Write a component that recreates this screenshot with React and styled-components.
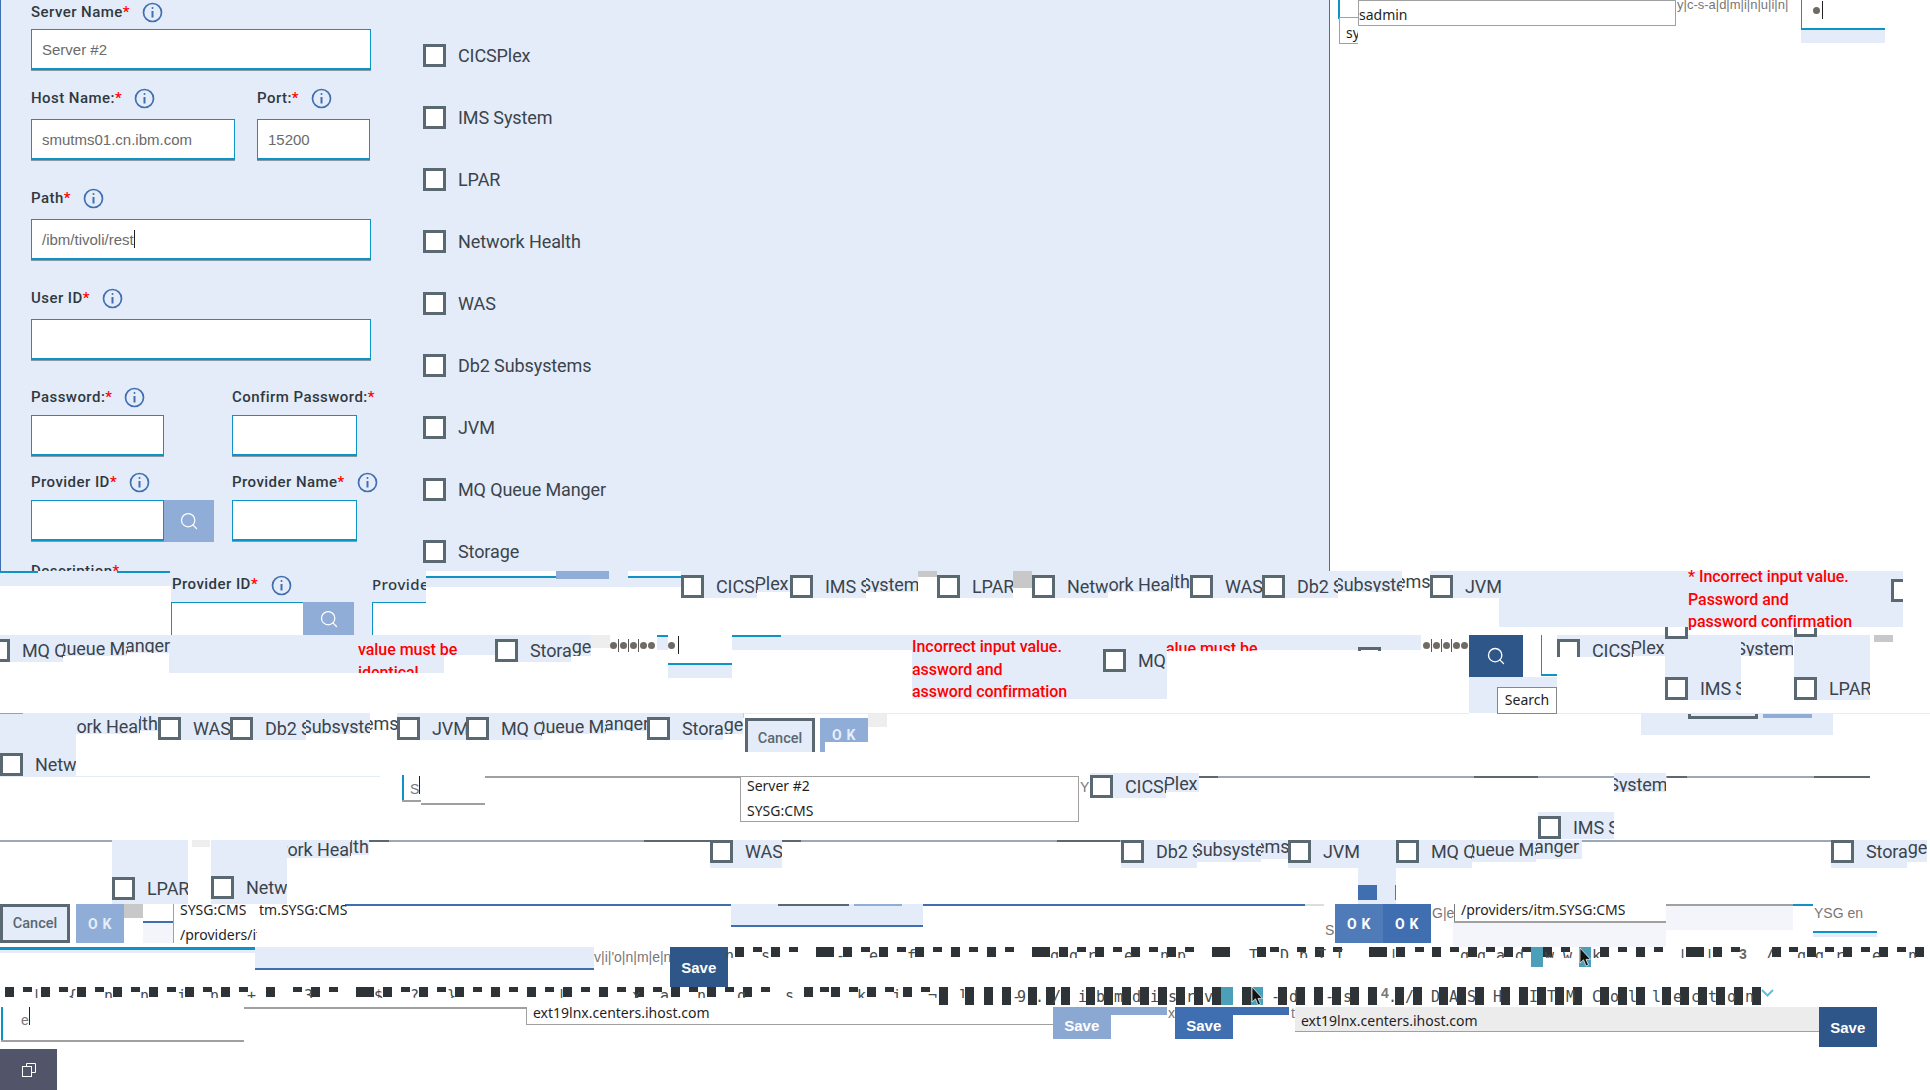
import React from 'react'
import styled, { createGlobalStyle, css } from 'styled-components'
import { Search } from 'lucide-react'

const PANEL_HEIGHT = 571
const PLEX = `Roboto, "Noto Sans", sans-serif`
const MONO = `"DejaVu Sans Mono", "Liberation Mono", monospace`
const ARIAL = `"Liberation Sans", Arial, sans-serif`
const LIGHT = '#e4ecf9'
const PALE = '#f3f5fb'
const TEAL = '#0f93c4'
const BLUE = '#3f6fb0'
const NAVY = '#2f5688'
const FADED = '#8fadd6'
const SLATE = '#5a6872'
const INK = '#2d3336'

const GlobalStyle = createGlobalStyle`
  html, body { margin: 0; padding: 0; background: #fff; }
  body { font-family: ${PLEX}; }
`

// pieces of the broken repaint sit on a free canvas, coordinates are page coordinates
const at = css`
  position: absolute;
  left: ${p => p.$x}px;
  top: ${p => p.$y - PANEL_HEIGHT}px;
`

const Page = styled.div`
  width: 1930px;
  height: 1090px;
  overflow: hidden;
  position: relative;
`

const Panel = styled.section`
  width: 1330px;
  height: ${PANEL_HEIGHT}px;
  box-sizing: border-box;
  overflow: hidden;
  display: flex;
  background: ${LIGHT};
  border-left: 1.5px solid ${BLUE};
  border-right: 1.5px solid ${BLUE};
`

const Form = styled.div`
  width: 340px;
  padding: 2px 0 0 30px;
  flex: none;
`

const FormRow = styled.div`
  display: flex;
  margin-top: ${p => p.$mt || 0}px;
`

const Field = styled.div`
  width: ${p => p.$w}px;
  margin-right: ${p => p.$gap || 0}px;
  flex: none;
`

const LabelRow = styled.div`
  height: 20px;
  margin-bottom: ${p => p.$mb}px;
  display: flex;
  align-items: center;
  white-space: nowrap;
`

const Label = styled.label`
  font-size: 15px;
  font-weight: 500;
  letter-spacing: 0.45px;
  color: #30393f;
`

const Star = styled.span`
  color: #f00;
`

const InfoMark = styled.svg`
  width: 21px;
  height: 21px;
  margin-left: ${p => p.$ml ?? 12}px;
  flex: none;
`

const InputBox = styled.div`
  height: 41px;
  box-sizing: border-box;
  display: flex;
  align-items: center;
  padding-left: 10px;
  background: #fff;
  border: 1px solid ${TEAL};
  border-bottom-width: 2px;
  box-shadow: 0 1px 0 #8b98a2;
  font-family: ${ARIAL};
  font-size: 15px;
  color: #6a6a6a;
`

const Caret = styled.span`
  display: inline-block;
  width: 1px;
  height: 18px;
  background: #222;
`

const SearchPair = styled.div`
  display: flex;
  width: 183px;
`

const SearchBox = styled.button`
  width: 50px;
  height: 42px;
  border: 0;
  padding: 0;
  display: flex;
  align-items: center;
  justify-content: center;
  background: ${p => p.$c || FADED};
  color: #fff;
`

const CheckColumn = styled.div`
  display: flex;
  flex-direction: column;
  gap: 39px;
  padding: 44px 0 0 52px;
`

const CheckRow = styled.div`
  display: flex;
  align-items: center;
  gap: 12px;
  height: 23px;
`

const CheckBox = styled.span`
  display: block;
  flex: none;
  width: 23px;
  height: 23px;
  box-sizing: border-box;
  border: 3px solid ${SLATE};
  background: #fff;
`

const CheckText = styled.span`
  font-size: 18px;
  letter-spacing: -0.1px;
  color: #3b444c;
  white-space: nowrap;
`

const Canvas = styled.div`
  position: relative;
  height: ${1090 - PANEL_HEIGHT}px;
`

const Patch = styled.div`
  ${at}
  width: ${p => p.$w}px;
  height: ${p => p.$h}px;
  background: ${p => p.$c || LIGHT};
`

const Scrap = styled.div`
  ${at}
  width: ${p => p.$w}px;
  height: ${p => p.$h}px;
  box-sizing: border-box;
  background: #fff;
  border: 0 solid ${p => p.$c || TEAL};
  border-top-width: ${p => (p.$edges.includes('t') ? 1.5 : 0)}px;
  border-left-width: ${p => (p.$edges.includes('l') ? 1.5 : 0)}px;
  border-right-width: ${p => (p.$edges.includes('r') ? 1.5 : 0)}px;
  border-bottom-width: ${p => (p.$edges.includes('b') ? 2 : 0)}px;
`

const Slice = styled.div`
  ${at}
  width: ${p => p.$w}px;
  height: ${p => p.$h}px;
  overflow: hidden;
  background: ${p => (p.$plain ? '#fff' : LIGHT)};
`

const SliceBox = styled(CheckBox)`
  position: absolute;
  left: 0;
  top: ${p => p.$top}px;
`

const SliceText = styled(CheckText)`
  position: absolute;
  left: ${p => p.$left}px;
  top: ${p => p.$top}px;
  line-height: 23px;
`

const Stub = styled.div`
  ${at}
  width: 23px;
  height: ${p => p.$h}px;
  box-sizing: border-box;
  background: #fff;
  border: 3px solid ${SLATE};
  border-width: ${p => p.$open === 'top' ? '0 3px 3px' : '3px 3px 0'};
`

const Redline = styled.div`
  ${at}
  font-size: 16px;
  font-weight: 500;
  letter-spacing: -0.05px;
  color: #f00;
  line-height: 22.5px;
  white-space: pre;
  height: ${p => p.$h}px;
  width: ${p => p.$w}px;
  overflow: hidden;
`

const Cancel = styled.button`
  ${at}
  width: 70px;
  height: ${p => p.$h}px;
  box-sizing: border-box;
  padding: ${p => p.$h < 39 ? '3px 0 0' : 0};
  border: 3px solid ${SLATE};
  ${p => p.$h < 39 && 'border-bottom: 0;'}
  background: ${LIGHT};
  color: ${SLATE};
  font: 500 14.5px ${PLEX};
`

const OkButton = styled.button`
  ${at}
  width: 48px;
  height: ${p => p.$h}px;
  border: 0;
  padding: 0;
  overflow: hidden;
  background: ${p => p.$c};
  color: ${p => p.$faded ? '#e6eefa' : '#fff'};
  font: 700 14px ${PLEX};
  letter-spacing: 0.6px;
`

const SaveButton = styled.button`
  ${at}
  width: 57.5px;
  height: ${p => p.$h}px;
  border: 0;
  padding: ${p => p.$pt || 0}px 0 0;
  background: ${p => p.$c};
  color: #fff;
  font: 700 15px ${ARIAL};
`

const NavyButton = styled(SearchBox)`
  ${at}
  width: 54px;
  height: 42px;
`

const SearchPiece = styled(SearchBox)`
  ${at}
  width: ${p => p.$w}px;
  height: ${p => p.$h}px;
  overflow: hidden;
`

const Tip = styled.div`
  ${at}
  width: 60px;
  height: 27px;
  box-sizing: border-box;
  border: 1px solid #888;
  background: #fff;
  color: #222;
  font: 14px "Noto Sans", sans-serif;
  text-align: center;
  line-height: 24px;
`

const Menu = styled.div`
  ${at}
  width: ${p => p.$w}px;
  height: ${p => p.$h}px;
  box-sizing: border-box;
  padding-left: ${p => p.$pad ?? 6}px;
  overflow: hidden;
  border: 1.5px solid #a0a0a0;
  ${p => p.$noTop && 'border-top: 0;'}
  ${p => p.$noRight && 'border-right: 0;'}
  ${p => p.$noLeft && 'border-left: 0;'}
  background: ${p => p.$c || '#fff'};
`

const MenuLine = styled.div`
  height: 25px;
  margin-top: ${p => p.$mt || 0}px;
  font: 14px/25px "Noto Sans", sans-serif;
  color: #1f1f1f;
  white-space: nowrap;
`

const FreeLine = styled.div`
  margin-top: ${p => p.$mt || 0}px;
  font: 14px/18px "Noto Sans", sans-serif;
  color: #1f1f1f;
  white-space: nowrap;
`

const FreeText = styled.div`
  ${at}
  font: ${p => p.$size || 14}px/18px ${p => p.$font || '"Noto Sans", sans-serif'};
  color: ${p => p.$c || '#1f1f1f'};
  white-space: pre;
  height: ${p => p.$h || 18}px;
  overflow: hidden;
  ${p => p.$w && `width: ${p.$w}px;`}
`

const Block = styled.div`
  ${at}
  width: ${p => p.$w || 9}px;
  height: ${p => p.$h}px;
  background: ${INK};
`

const Glyph = styled.div`
  ${at}
  width: 10px;
  height: ${p => p.$h}px;
  overflow: hidden;
  font: 15px/18px ${MONO};
  color: #444c50;
`

const DotRun = styled.div`
  ${at}
  display: flex;
  align-items: center;
  height: 14px;
`

const Dot = styled.span`
  width: 7px;
  height: 7px;
  border-radius: 50%;
  background: #6f6a64;
  margin-right: ${p => p.$gap ?? 1}px;
`

const Tick = styled.span`
  width: 1px;
  height: 13px;
  background: #5a5a5a;
  margin-right: 1px;
`

const RestoreTab = styled.div`
  ${at}
  width: 57px;
  height: 41px;
  display: flex;
  align-items: center;
  justify-content: center;
  background: #52556a;
`

const Pointer = styled.svg`
  ${at}
  width: 12px;
  height: 19px;
`

const Chevron = styled.svg`
  ${at}
  width: 13px;
  height: 8px;
`

const Info = ({ ml }) => (
  <InfoMark $ml={ml} viewBox="0 0 21 21" fill="none" stroke="#3f6fb0" strokeWidth="1.7">
    <circle cx="10.5" cy="10.5" r="9" />
    <path d="M10.5 9v6.5" strokeWidth="2" />
    <circle cx="10.5" cy="6" r="1" fill="#3f6fb0" stroke="none" />
  </InfoMark>
)

const FieldLabel = ({ text, mb, ml, info = true }) => (
  <LabelRow $mb={mb}>
    <Label>{text}<Star>*</Star></Label>
    {info && <Info ml={ml} />}
  </LabelRow>
)

const CHECKS = ['CICSPlex', 'IMS System', 'LPAR', 'Network Health', 'WAS', 'Db2 Subsystems', 'JVM', 'MQ Queue Manger', 'Storage']

// how far each label reaches from the left of its checkbox, and how much its second slice is lifted
const REACH = {
  CICSPlex: [109, 3.5],
  'IMS System': [128, 2.5],
  LPAR: [76, 0],
  'Network Health': [158, 2.5],
  WAS: [72, 0],
  'Db2 Subsystems': [168, 2.5],
  JVM: [74, 0],
  'MQ Queue Manger': [186, 2.5],
  Storage: [96, 4.5],
}

// one checkbox row torn in up to three slices, each lifted a little more than the one before
const TornOption = ({ x, y, label, skip, cut, top = 4, under = 0, plainEnd, h }) => {
  const [reach, lift] = REACH[label]
  const first = h || top + 23 + under
  return (
    <>
      {!skip && (
        <Slice $x={x} $y={y - top} $w={cut || Math.min(reach, 76)} $h={first}>
          <SliceBox $top={top} />
          <SliceText $left={35} $top={top}>{label}</SliceText>
        </Slice>
      )}
      {!cut && reach > 76 && (
        <Slice $x={x + 76} $y={y - top} $w={Math.min(reach - 76, 64)} $h={top + 17 + under}>
          <SliceText $left={35 - 76} $top={top - lift}>{label}</SliceText>
        </Slice>
      )}
      {!cut && reach > 140 && (
        <Slice $x={x + 140} $y={y - top} $w={reach - 140} $h={top + 14 + under} $plain={plainEnd}>
          <SliceText $left={35 - 140} $top={top - 5}>{label}</SliceText>
        </Slice>
      )}
    </>
  )
}

const OPTIONS = [
  { x: 681, y: 575, label: 'CICSPlex' },
  { x: 790, y: 575, label: 'IMS System' },
  { x: 937, y: 575, label: 'LPAR' },
  { x: 1032, y: 575, label: 'Network Health' },
  { x: 1190, y: 575, label: 'WAS' },
  { x: 1262, y: 575, label: 'Db2 Subsystems', plainEnd: true },
  { x: 1430, y: 575, label: 'JVM' },
  { x: -13, y: 639, label: 'MQ Queue Manger' },
  { x: 495, y: 639, label: 'Storage' },
  { x: 1103, y: 649, label: 'MQ Queue Manger', cut: 64 },
  { x: 1557, y: 639, label: 'CICSPlex', h: 22 },
  { x: 1665, y: 639, label: 'IMS System', skip: true },
  { x: 1665, y: 677, label: 'IMS System', cut: 76 },
  { x: 1794, y: 677, label: 'LPAR', cut: 76 },
  { x: 0, y: 717, label: 'Network Health', skip: true },
  { x: 0, y: 753, label: 'Network Health', cut: 76 },
  { x: 158, y: 717, label: 'WAS' },
  { x: 230, y: 717, label: 'Db2 Subsystems', plainEnd: true },
  { x: 397, y: 717, label: 'JVM' },
  { x: 466, y: 717, label: 'MQ Queue Manger' },
  { x: 647, y: 717, label: 'Storage' },
  { x: 1090, y: 775, label: 'CICSPlex', top: 2 },
  { x: 1538, y: 775, label: 'IMS System', skip: true, top: 2 },
  { x: 1538, y: 816, label: 'IMS System', cut: 76 },
  { x: 112, y: 877, label: 'LPAR', cut: 76 },
  { x: 211, y: 876, label: 'Network Health', cut: 76 },
  { x: 211, y: 840, label: 'Network Health', skip: true, top: 0, under: 1 },
  { x: 710, y: 840, label: 'WAS', top: 0, under: 5 },
  { x: 1121, y: 840, label: 'Db2 Subsystems', top: 0, under: 5 },
  { x: 1288, y: 840, label: 'JVM', top: 0, under: 5 },
  { x: 1396, y: 840, label: 'MQ Queue Manger', top: 0, under: 5 },
  { x: 1831, y: 840, label: 'Storage', top: 0, under: 5 },
]

// x, y, w, h, colour
const PATCHES = [
  [0, 571, 171, 15], [171, 571, 255, 64], [426, 571, 255, 16],
  [1499, 571, 404, 56], [1801, 30, 84, 13],
  [169, 635, 275, 38], [444, 635, 51, 20], [657, 635, 11, 15],
  [668, 663, 64, 15], [732, 635, 180, 15], [912, 635, 255, 64], [1167, 635, 254, 15],
  [1469, 677, 88, 36], [1665, 635, 76, 64], [1794, 635, 76, 64],
  [0, 713, 76, 64], [1641, 713, 192, 22], [112, 840, 76, 64], [211, 840, 76, 64],
  [1358, 840, 38, 64], [731, 904, 192, 21], [255, 947, 339, 21], [0, 949, 255, 4],
  [143, 921, 30, 22, PALE], [1453, 921, 213, 26, PALE], [1666, 905, 127, 25, PALE], [1813, 932, 64, 5],
  // grey remains
  [918, 571, 19, 6, '#c8c8c8'], [1013, 571, 19, 17, '#c8c8c8'], [1874, 635, 19, 7, '#c8c8c8'],
  [124, 904, 19, 14, '#c8c8c8'], [590, 635, 20, 13, '#eeeeee'], [868, 713, 19, 14, '#eeeeee'],
  [192, 840, 18, 7, '#eeeeee'],
  // stray colour
  [1763, 713, 49, 5, FADED], [1358, 885, 19, 15, BLUE], [1395, 885, 1, 15, TEAL],
  [1531, 947, 12, 20, '#4b9fb8'], [1579, 947, 12, 20, '#4b9fb8'], [1221, 987, 12, 18, '#4b9fb8'], [1251, 987, 12, 18, '#4b9fb8'],
  [1110, 1007, 57, 8, '#8ba8d2'], [1232, 1007, 57, 8, BLUE],
  // bottom edge of a cancel button
  [1688, 713, 70, 6, SLATE], [1691, 713, 64, 3, LIGHT],
]

const RULES = [
  [0, 571, 38, 2, TEAL], [117, 571, 53, 2, TEAL],
  [0, 713, 1469, 1, LIGHT], [0, 776, 380, 1, LIGHT], [1557, 713, 373, 1, LIGHT],
  [1198, 776, 672, 1.5, '#9aa8b8'], [1193, 776, 25, 2, SLATE], [1474, 776, 64, 2, SLATE], [1667, 776, 20, 2, SLATE], [1814, 776, 56, 2, SLATE],
  [0, 840, 112, 1.5, '#9aa8b8'], [287, 840, 1000, 1.5, '#9aa8b8'], [369, 840, 20, 2, SLATE], [644, 840, 66, 2, SLATE], [781, 840, 20, 2, SLATE], [1057, 840, 63, 2, SLATE],
  [1419, 840, 412, 1.5, '#9aa8b8'],
  [345, 904, 386, 1.5, BLUE], [923, 904, 382, 1.5, BLUE], [778, 904, 71, 1.5, SLATE], [854, 904, 48, 1.5, FADED], [731, 925, 192, 1.5, BLUE],
  [143, 921, 30, 1.5, BLUE], [173, 904, 1, 39, '#a0a0a0'], [1305, 904, 19, 1.5, '#dddddd'],
  [0, 947, 255, 2.5, TEAL], [255, 968, 339, 1.5, BLUE],
  [1666, 904, 127, 1.5, '#a0a0a0'], [1793, 904, 20, 2, TEAL], [1813, 931, 64, 2, TEAL],
  [732, 635, 49, 2, TEAL], [668, 663, 64, 2, TEAL], [657, 635, 11, 1.5, TEAL],
  [1, 1007, 1.5, 33, TEAL], [1, 1040, 243, 1.5, '#a0a0a0'], [244, 1007, 282, 1.5, '#a0a0a0'],
  [402, 775, 1.5, 25, TEAL], [402, 800, 19, 1.5, '#a0a0a0'], [421, 803, 64, 1.5, '#a0a0a0'], [485, 776, 255, 1.5, '#a0a0a0'],
  [0, 713, 23, 1, '#a0a0a0'],
  [1454, 904, 1, 17, '#777777'], [1454, 921, 212, 1.5, '#a0a0a0'],
  [1338, 0, 1.5, 17, TEAL], [1338, 17, 20, 1.5, TEAL],
  [743, 713, 1, 5, '#cccccc'],
]

const tall = 10
const short = 5
const full = 18

// x, height, optional width
const ROW_A = [
  [735, tall], [753, short], [771, tall], [789, short], [816, tall, 18], [843, tall], [861, short], [879, tall], [897, short],
  [915, tall], [933, short], [951, tall], [969, short], [987, tall], [1005, short], [1032, tall, 18], [1059, tall], [1077, short],
  [1095, tall], [1113, short], [1131, tall], [1149, short], [1167, tall], [1185, short], [1212, tall, 18], [1257, tall], [1270, short],
  [1297, short], [1315, tall], [1333, short], [1369, tall, 18], [1396, tall], [1415, short], [1432, tall], [1450, short], [1468, tall],
  [1486, short], [1504, tall], [1522, short], [1543, tall], [1561, short], [1600, tall], [1618, short], [1636, tall], [1654, short],
  [1686, tall, 18], [1713, tall], [1731, short], [1772, tall], [1789, short], [1807, tall], [1825, short], [1843, tall], [1861, short],
  [1879, tall], [1897, short], [1915, tall],
]

const ROW_B = [
  [5, tall], [23, short], [41, tall], [59, short], [77, tall], [95, short], [113, tall], [131, short], [149, tall], [167, short],
  [185, tall], [203, short], [221, tall], [239, short], [266, tall], [293, short], [311, tall], [329, short], [356, tall, 18], [383, tall],
  [401, short], [419, tall], [437, short], [455, tall], [473, short], [491, tall], [509, short], [527, tall], [545, short], [563, tall],
  [581, short], [599, tall], [617, short], [635, tall], [653, short], [671, tall], [689, short], [707, tall], [725, short], [743, tall],
  [761, short], [804, tall], [820, short], [831, tall], [849, short], [867, tall], [885, short], [903, tall], [921, short],
  [939, full], [965, full], [984, full], [1002, full], [1028, full], [1046, full], [1061, full], [1086, full], [1104, full], [1122, full],
  [1140, full], [1158, full], [1176, full], [1194, full], [1212, full], [1242, full], [1278, full], [1296, full], [1314, full], [1332, full],
  [1350, full], [1368, full], [1395, full], [1413, full], [1439, full], [1457, full], [1475, full], [1501, full], [1519, full], [1537, full],
  [1555, full], [1573, full], [1600, full], [1618, full], [1636, full], [1662, full], [1680, full], [1698, full], [1716, full], [1734, full], [1752, full],
]

const GLYPHS_A = 'n:725 s:761 -:836 e:869 f:907 q:1050 g:1069 r:1087 e:1124 n:1160 p:1177 T:1249 D:1280 p:1299 T:1317 I:1335 |:1389 q:1460 g:1477 a:1496 d:1515 w:1545 w:1563 k:1592 |:1678 |:1705 /:1765 q:1797 g:1815 r:1835 e:1872 n:1908'
const GLYPHS_B_CLIPPED = '{:68 n:104 n:140 j:177 n:210 +:247 3:304 $:374 ?:410 }:447 |:32 |:557 x:632 a:660 n:697 q:737 s:785 k:857 j:892 l:959 ¬:928'
const GLYPHS_B = '-:1012 9:1017 .:1035 /:1052 i:1078 b:1096 m:1114 d:1132 i:1150 s:1168 r:1186 v:1204 -:1271 d:1289 -:1325 s:1343 .:1388 /:1405 D:1431 A:1449 S:1467 H:1493 _:1513 I:1529 T:1547 M:1566 C:1592 o:1610 l:1628 l:1652 e:1673 c:1691 t:1708 o:1727 n:1745'

const parseGlyphs = list => list.split(' ').map(item => {
  const i = item.lastIndexOf(':')
  return [item.slice(0, i), Number(item.slice(i + 1))]
})

const Dots = ({ x, y }) => (
  <DotRun $x={x} $y={y}>
    <Dot /><Tick /><Dot /><Tick /><Dot /><Tick /><Dot /><Dot />
  </DotRun>
)

const TallRows = () => (
  <>
    {ROW_A.map(([x, h, w]) => <Block key={`a${x}`} $x={x} $y={947} $h={h} $w={w} />)}
    {ROW_B.map(([x, h, w]) => <Block key={`b${x}`} $x={x} $y={987} $h={h} $w={w} />)}
    {parseGlyphs(GLYPHS_A).map(([c, x]) => <Glyph key={`ga${x}${c}`} $x={x} $y={947} $h={11}>{c}</Glyph>)}
    {parseGlyphs(GLYPHS_B_CLIPPED).map(([c, x]) => <Glyph key={`gc${x}${c}`} $x={x} $y={987} $h={11}>{c}</Glyph>)}
    {parseGlyphs(GLYPHS_B).map(([c, x]) => <Glyph key={`gb${x}${c}`} $x={x} $y={988} $h={17}>{c}</Glyph>)}
    <FreeText $x={1381} $y={984} $size={14} $font={ARIAL} $c="#777"><b>4</b></FreeText>
    <FreeText $x={1739} $y={945} $size={14} $font={ARIAL} $c="#666"><b>3</b></FreeText>
    <Chevron $x={1761} $y={989} viewBox="0 0 13 8" fill="none" stroke="#5bc0de" strokeWidth="2">
      <path d="M1 1l5.5 5.5L12 1" />
    </Chevron>
    <Pointer $x={1251} $y={987} viewBox="0 0 12 19"><path d="M1 0v15l3.5-3.2L7 18l2.5-1-2.5-5.6h4.5z" fill="#111" stroke="#fff" strokeWidth=".7" /></Pointer>
    <Pointer $x={1579} $y={948} viewBox="0 0 12 19"><path d="M1 0v15l3.5-3.2L7 18l2.5-1-2.5-5.6h4.5z" fill="#111" stroke="#fff" strokeWidth=".7" /></Pointer>
  </>
)

export default function App() {
  return (
    <Page>
      <GlobalStyle />
      <Panel>
        <Form>
          <Field $w={340}>
            <FieldLabel text="Server Name" mb={7} />
            <InputBox>Server #2</InputBox>
          </Field>
          <FormRow $mt={18}>
            <Field $w={204} $gap={22}>
              <FieldLabel text="Host Name:" mb={11} />
              <InputBox>smutms01.cn.ibm.com</InputBox>
            </Field>
            <Field $w={113}>
              <FieldLabel text="Port:" mb={11} />
              <InputBox>15200</InputBox>
            </Field>
          </FormRow>
          <FormRow $mt={28}>
            <Field $w={340}>
              <FieldLabel text="Path" mb={11} />
              <InputBox>/ibm/tivoli/rest<Caret /></InputBox>
            </Field>
          </FormRow>
          <FormRow $mt={28}>
            <Field $w={340}>
              <FieldLabel text="User ID" mb={11} />
              <InputBox />
            </Field>
          </FormRow>
          <FormRow $mt={27}>
            <Field $w={133} $gap={68}>
              <FieldLabel text="Password:" mb={8} />
              <InputBox />
            </Field>
            <Field $w={125}>
              <FieldLabel text="Confirm Password:" mb={8} info={false} />
              <InputBox />
            </Field>
          </FormRow>
          <FormRow $mt={16}>
            <Field $w={183} $gap={18}>
              <FieldLabel text="Provider ID" mb={8} />
              <SearchPair>
                <Field $w={133}><InputBox /></Field>
                <SearchBox><Search size={20} strokeWidth={1.5} /></SearchBox>
              </SearchPair>
            </Field>
            <Field $w={125}>
              <FieldLabel text="Provider Name" mb={8} />
              <InputBox />
            </Field>
          </FormRow>
          <FormRow $mt={19}>
            <FieldLabel text="Description" mb={0} info={false} />
          </FormRow>
        </Form>
        <CheckColumn>
          {CHECKS.map(name => (
            <CheckRow key={name}>
              <CheckBox />
              <CheckText>{name}</CheckText>
            </CheckRow>
          ))}
        </CheckColumn>
      </Panel>

      <Canvas>
        {PATCHES.map(([x, y, w, h, c]) => <Patch key={`${x}-${y}-${w}`} $x={x} $y={y} $w={w} $h={h} $c={c} />)}
        {RULES.map(([x, y, w, h, c]) => <Patch key={`r${x}-${y}-${w}`} $x={x} $y={y} $w={w} $h={h} $c={c} />)}

        {/* fragments of the form's last rows */}
        <Scrap $x={426} $y={571} $w={130} $h={7} $edges="b" />
        <Patch $x={556} $y={571} $w={53} $h={8} $c={FADED} />
        <Scrap $x={628} $y={571} $w={53} $h={7} $edges="b" />
        <FreeText $x={172} $y={575} $size={15} $font={PLEX} $c="#30393f"><Label>Provider ID<Star>*</Star></Label></FreeText>
        <FreeText $x={271} $y={575} $h={21}><Info ml={0} /></FreeText>
        <FreeText $x={372} $y={575} $w={54}><Label>Provider Name</Label></FreeText>
        <Scrap $x={171} $y={602} $w={132} $h={33} $edges="tl" />
        <SearchPiece $x={303} $y={602} $w={51} $h={33}><Search size={20} strokeWidth={1.5} /></SearchPiece>
        <Scrap $x={372} $y={602} $w={54} $h={33} $edges="tl" />

        {OPTIONS.map(o => <TornOption key={`${o.x}-${o.y}`} {...o} />)}

        <Slice $x={1891} $y={575} $w={12} $h={27}><SliceBox $top={4} /></Slice>
        <Stub $x={1358} $y={647} $h={4} />
        <Stub $x={1665} $y={627} $h={12} $open="top" />
        <Stub $x={1794} $y={628} $h={9} $open="top" />

        <Redline $x={1688} $y={566} $w={215} $h={66}>{'* Incorrect input value.\nPassword and\npassword confirmation'}</Redline>
        <Redline $x={912} $y={636} $w={190} $h={63}>{'Incorrect input value.\nassword and\nassword confirmation'}</Redline>
        <Redline $x={358} $y={639} $w={100} $h={34}>{'value must be\nidentical'}</Redline>
        <Redline $x={1166} $y={638} $w={96} $h={13}>{'alue must be'}</Redline>

        <Scrap $x={1541} $y={635} $w={16} $h={41} $edges="lb" />
        <NavyButton $x={1469} $y={635} $c={NAVY}><Search size={20} strokeWidth={1.6} /></NavyButton>
        <Tip $x={1497} $y={687}>Search</Tip>

        <Dots x={610} y={638} />
        <Dots x={1423} y={638} />
        <DotRun $x={668} $y={638}><Dot $gap={3} /><Caret /></DotRun>

        <Cancel $x={745} $y={718} $h={34}>Cancel</Cancel>
        <OkButton $x={820} $y={718} $h={34} $c={FADED} $faded>O K</OkButton>
        <Patch $x={825} $y={742} $w={43} $h={10} $c="#fff" />
        <Cancel $x={0} $y={904} $h={39}>Cancel</Cancel>
        <OkButton $x={76} $y={904} $h={39} $c={FADED} $faded>O K</OkButton>
        <OkButton $x={1335} $y={904} $h={39} $c="#4f7cb8">O K</OkButton>
        <OkButton $x={1383} $y={904} $h={39} $c={BLUE}>O K</OkButton>

        <FreeText $x={410} $y={776} $font={ARIAL} $c="#777">S<Caret /></FreeText>
        <Menu $x={740} $y={776} $w={339} $h={46}>
          <MenuLine $mt={-4}>Server #2</MenuLine>
          <MenuLine>SYSG:CMS</MenuLine>
        </Menu>
        <FreeText $x={1080} $y={778} $font={ARIAL} $c="#777">Y</FreeText>

        <FreeText $x={180} $y={901}>SYSG:CMS</FreeText>
        <FreeText $x={259} $y={901}>tm.SYSG:CMS</FreeText>
        <FreeText $x={180} $y={926} $w={77}>/providers/itm.SYSG:CMS</FreeText>
        <FreeText $x={1325} $y={921} $font={ARIAL} $c="#777">S</FreeText>
        <FreeText $x={1432} $y={904} $font={ARIAL} $c="#777">G|e</FreeText>
        <FreeText $x={1461} $y={901}>/providers/itm.SYSG:CMS</FreeText>
        <FreeText $x={1814} $y={904} $font={ARIAL} $c="#777">YSG en</FreeText>
        <FreeText $x={594} $y={948} $font={ARIAL} $c="#777">v|i|'o|n|m|e|n|t</FreeText>

        <SaveButton $x={670} $y={947} $h={40} $c={NAVY}>Save</SaveButton>
        <TallRows />

        <FreeText $x={21} $y={1007} $font={ARIAL} $size={14} $c="#777">e<Caret /></FreeText>
        <Menu $x={526} $y={1007} $w={527} $h={18} $noTop $pad={6} $noRight>
          <FreeLine $mt={-3}>ext19lnx.centers.ihost.com</FreeLine>
        </Menu>
        <SaveButton $x={1053} $y={1007} $h={32} $pt={5} $c="#8ba8d2">Save</SaveButton>
        <FreeText $x={1168} $y={1004} $font={ARIAL} $c="#777">x</FreeText>
        <SaveButton $x={1175} $y={1007} $h={32} $pt={5} $c={BLUE}>Save</SaveButton>
        <FreeText $x={1291} $y={1004} $font={ARIAL} $c="#777">t</FreeText>
        <Menu $x={1295} $y={1007} $w={524} $h={25} $c="#ececec" $noTop $noRight $noLeft $pad={6}>
          <FreeLine $mt={5}>ext19lnx.centers.ihost.com</FreeLine>
        </Menu>
        <SaveButton $x={1819} $y={1007} $h={40} $c={NAVY}>Save</SaveButton>

        <RestoreTab $x={0} $y={1049}>
          <svg width="14" height="14" viewBox="0 0 14 14" fill="none" stroke="#fff" strokeWidth="1">
            <path d="M4.5 3V.5h9v9H10" />
            <rect x=".5" y="3.5" width="9" height="10" />
          </svg>
        </RestoreTab>

        {/* top right corner, left of it the panel ends */}
        <Menu $x={1339} $y={17} $w={19} $h={27} $noRight>
          <MenuLine $mt={2}>sy</MenuLine>
        </Menu>
        <Menu $x={1358} $y={0} $w={318} $h={26} $pad={0}>
          <MenuLine $mt={1}>sadmin</MenuLine>
        </Menu>
        <FreeText $x={1677} $y={-4} $w={124} $h={16} $font={ARIAL} $size={13} $c="#777">y|c-s-a|d|m|i|n|u|i|n|</FreeText>
        <Scrap $x={1801} $y={0} $w={84} $h={30} $edges="lb" />
        <DotRun $x={1813} $y={3}><Dot $gap={2} /><Caret /></DotRun>
      </Canvas>
    </Page>
  )
}
